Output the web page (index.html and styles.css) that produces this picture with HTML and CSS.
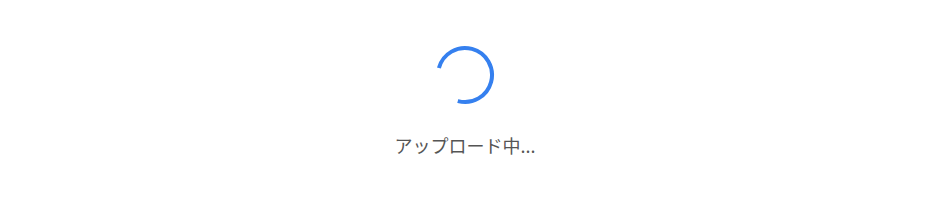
FILE: index.html
```html
<!DOCTYPE html>
<html lang="ja">
<head>
    <meta charset="UTF-8">
    <meta name="viewport" content="width=device-width, initial-scale=1.0">
    <title>アップロード中</title>
    <link rel="stylesheet" href="styles.css">
</head>
<body>
    <div class="loader">
        <svg class="spinner" width="62" height="62" viewBox="0 0 62 62">
            <circle cx="31" cy="31" r="27" fill="none" stroke="#3580ef" stroke-width="4"
                    stroke-dasharray="127 43" transform="rotate(195 31 31)"/>
        </svg>
        <div class="status">アップロード中...</div>
    </div>
</body>
</html>
```

FILE: styles.css
```css
html, body {
    margin: 0;
    height: 100%;
    background-color: #fff;
}
body {
    font-family: "Noto Sans CJK JP", "Noto Sans", sans-serif;
    display: flex;
    align-items: center;
    justify-content: center;
}
.loader {
    display: flex;
    flex-direction: column;
    align-items: center;
}
.spinner {
    display: block;
    margin-bottom: 26px;
}
.status {
    font-size: 18px;
    line-height: 26px;
    color: #555;
}
```
